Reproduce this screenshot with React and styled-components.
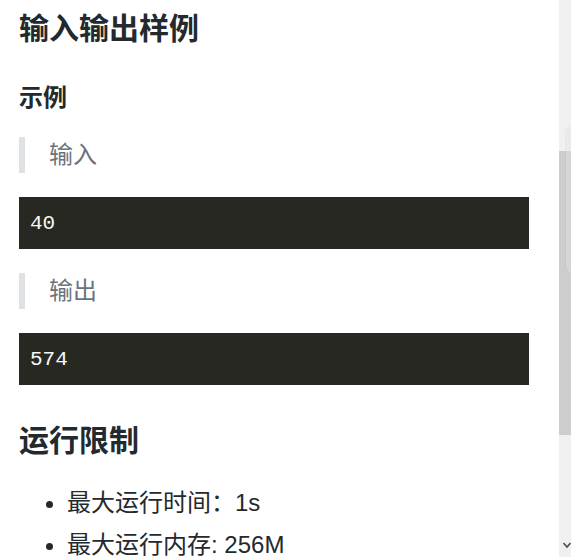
import React from "react";
import styled, { createGlobalStyle } from "styled-components";

const Global = createGlobalStyle`
  html, body { margin: 0; padding: 0; background: #fff; }
  body { overflow: hidden; }
`;

const Page = styled.div`
  display: flex;
  height: 557px;
  width: 571px;
  overflow: hidden;
  position: relative;
  font-family: "Liberation Sans", "Noto Sans CJK SC", sans-serif;
  color: #24292e;
`;

const Main = styled.main`
  flex: 1;
  min-width: 0;
  padding: 10px 30px 0 19px;
  overflow: hidden;
  font-size: 24px;
  line-height: 1.5;
`;

const H2 = styled.h2`
  margin: ${(p) => (p.$first ? "0" : "37px")} 0 24px;
  font-size: 30px;
  line-height: 1.25;
  font-weight: 700;
  color: #24292e;
`;

const H3 = styled.h3`
  margin: 35px 0 24px;
  font-size: 24px;
  line-height: 1.25;
  font-weight: 700;
`;

const Quote = styled.blockquote`
  margin: 0 0 24px;
  padding: 0 24px;
  border-left: 6px solid #dfe2e5;
  color: #6a737d;
  font-size: 24px;
  line-height: 36px;
`;

const Code = styled.pre`
  margin: 0 0 24px;
  padding: 13px 11px 11px;
  background: #272822;
  color: #f8f8f2;
  font-family: "Liberation Mono", "DejaVu Sans Mono", monospace;
  font-size: 21px;
  line-height: 28px;
  overflow: hidden;
`;

const List = styled.ul`
  margin: 26px 0 0;
  padding-left: 48px;
`;

const Item = styled.li`
  margin-bottom: 6px;
  line-height: 36px;
`;

const Track = styled.div`
  width: 12px;
  flex: none;
  background: #f0f0f0;
  display: flex;
  flex-direction: column;
  align-items: stretch;
`;

const Thumb = styled.div`
  margin-top: 151px;
  height: 284px;
  background: #cdcdcd;
`;

const Arrow = styled.svg`
  margin-top: auto;
  margin-bottom: 8px;
  margin-left: 4px;
  display: block;
`;

const Floating = styled.div`
  position: absolute;
  left: 566px;
  top: 124px;
  width: 40px;
  height: 150px;
  border-radius: 9px;
  background: rgba(228, 228, 228, 0.43);
  box-shadow: -1px 0 0 rgba(0, 0, 0, 0.03);
`;

export default function App() {
  return (
    <>
      <Global />
      <Page>
        <Main>
          <H2 $first>输入输出样例</H2>
          <H3>示例</H3>
          <Quote>输入</Quote>
          <Code>40</Code>
          <Quote>输出</Quote>
          <Code>574</Code>
          <H2>运行限制</H2>
          <List>
            <Item>最大运行时间：1s</Item>
            <Item>最大运行内存: 256M</Item>
          </List>
        </Main>
        <Track>
          <Thumb />
          <Arrow width="8" height="8" viewBox="0 0 8 8">
            <path d="M0.5 2 L4 6 L7.5 2" fill="none" stroke="#505050" strokeWidth="1.6" />
          </Arrow>
        </Track>
        <Floating />
      </Page>
    </>
  );
}
